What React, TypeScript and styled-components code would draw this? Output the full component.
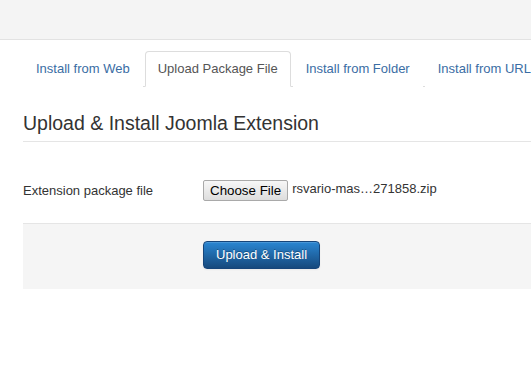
import styled, { createGlobalStyle } from "styled-components";

const GlobalStyle = createGlobalStyle`
	body {
		margin: 0;
		overflow: hidden;
		background: #fff;
		font-family: "Liberation Sans", Arial, sans-serif;
		font-size: 13px;
		color: #333;
	}
`;

const Page = styled.div`
	width: 531px;
	overflow: hidden;
`;

const TopBar = styled.div`
	height: 39px;
	background: #f4f4f4;
	border-bottom: 1px solid #e2e2e2;
`;

const Content = styled.div`
	width: 900px;
	padding: 11px 0 0 23px;
`;

const Tabs = styled.ul`
	display: flex;
	margin: 0;
	padding: 0;
	list-style: none;
	border-bottom: 1px solid #ddd;
`;

const Tab = styled.li<{ $active?: boolean }>`
	margin: 0 2px -1px 0;
	padding: 8px 12px;
	line-height: 18px;
	border: 1px solid ${(p) => (p.$active ? "#ddd" : "transparent")};
	border-bottom-color: transparent;
	border-radius: 4px 4px 0 0;
	background: #fff;
	color: ${(p) => (p.$active ? "#555" : "#3a6da4")};
	white-space: nowrap;
	cursor: pointer;
`;

const Legend = styled.h2`
	margin: 18px 0 0;
	font-size: 19.5px;
	font-weight: normal;
	line-height: 36px;
	color: #333;
	border-bottom: 1px solid #e5e5e5;
`;

const ControlGroup = styled.div`
	display: flex;
	align-items: center;
	margin-top: 38px;
	height: 21px;
`;

const Label = styled.label`
	width: 180px;
	flex-shrink: 0;
	line-height: 18px;
`;

const FileButton = styled.button`
	height: 21px;
	padding: 0 6px;
	font-family: "Liberation Sans", Arial, sans-serif;
	font-size: 13.33px;
	color: #000;
	background: linear-gradient(#f7f7f7, #dddddd);
	border: 1px solid #a9a9a9;
	border-radius: 2px;
`;

const FileName = styled.span`
	margin: -5px 0 0 4px;
	color: #333;
`;

const FormActions = styled.div`
	margin-top: 22px;
	padding: 17px 20px 20px 180px;
	background: #f5f5f5;
	border-top: 1px solid #e5e5e5;
`;

const PrimaryButton = styled.button`
	padding: 4px 12px;
	font-family: "Liberation Sans", Arial, sans-serif;
	font-size: 13px;
	line-height: 18px;
	color: #fff;
	text-shadow: 0 -1px 0 rgba(0, 0, 0, 0.3);
	background: linear-gradient(#2a86d2, #16497d);
	border: 1px solid #16457a;
	border-radius: 4px;
	box-shadow: inset 0 1px 0 rgba(255, 255, 255, 0.15), 0 1px 2px rgba(0, 0, 0, 0.05);
`;

const tabs = ["Install from Web", "Upload Package File", "Install from Folder", "Install from URL"];

export default function App() {
	return (
		<Page>
			<GlobalStyle />
			<TopBar />
			<Content>
				<Tabs>
					{tabs.map((t) => (
						<Tab key={t} $active={t === "Upload Package File"}>
							{t}
						</Tab>
					))}
				</Tabs>
				<Legend>Upload &amp; Install Joomla Extension</Legend>
				<ControlGroup>
					<Label>Extension package file</Label>
					<FileButton>Choose File</FileButton>
					<FileName>rsvario-mas…271858.zip</FileName>
				</ControlGroup>
				<FormActions>
					<PrimaryButton>Upload &amp; Install</PrimaryButton>
				</FormActions>
			</Content>
		</Page>
	);
}
